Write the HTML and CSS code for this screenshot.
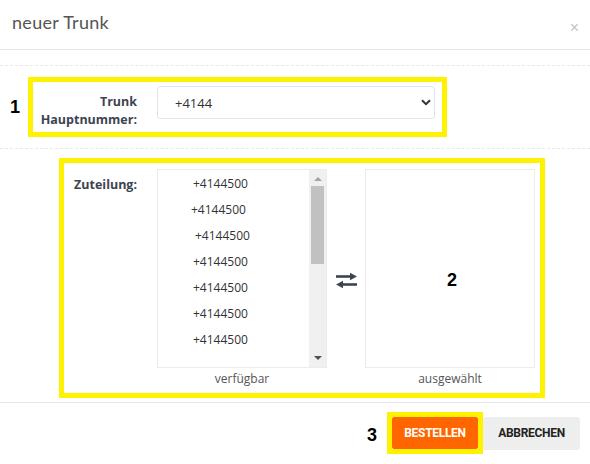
FILE: index.html
```html
<!DOCTYPE html>
<html lang="de">
<head>
<meta charset="utf-8">
<title>neuer Trunk</title>
<link rel="stylesheet" href="styles.css">
</head>
<body>
<div class="modal">
  <div class="modal-header">
    <h4 class="modal-title">neuer Trunk</h4>
    <span class="close">&times;</span>
  </div>
  <div class="modal-body">
    <div class="form-row row-1">
      <span class="marker">1</span>
      <div class="hl hl-1">
        <label class="lbl lbl-1">Trunk<br>Hauptnummer:</label>
        <div class="select">
          <span class="select-value">+4144</span>
          <svg class="chevron" width="10" height="7" viewBox="0 0 10 7"><path d="M1 1.2 L5 5.2 L9 1.2" fill="none" stroke="#333" stroke-width="2"/></svg>
        </div>
      </div>
    </div>
    <div class="form-row row-2">
      <div class="hl hl-2">
        <label class="lbl lbl-2">Zuteilung:</label>
        <div class="dual">
          <div class="dual-col">
            <div class="listbox">
              <ul class="items">
                <li>+4144500</li>
                <li class="s1">+4144500</li>
                <li class="s2">+4144500</li>
                <li>+4144500</li>
                <li>+4144500</li>
                <li>+4144500</li>
                <li>+4144500</li>
              </ul>
              <div class="scrollbar">
                <span class="arrow up"></span>
                <span class="thumb"></span>
                <span class="arrow down"></span>
              </div>
            </div>
            <div class="caption">verfügbar</div>
          </div>
          <div class="swap">
            <svg width="23" height="17" viewBox="0 0 23 17">
              <path d="M1 4.5 H16" stroke="#3d4451" stroke-width="2.6"/>
              <path d="M15 0.8 L22 4.5 L15 8.2 Z" fill="#3d4451"/>
              <path d="M7 12.5 H22" stroke="#3d4451" stroke-width="2.6"/>
              <path d="M8 8.8 L1 12.5 L8 16.2 Z" fill="#3d4451"/>
            </svg>
          </div>
          <div class="dual-col">
            <div class="listbox listbox-right">
              <span class="marker marker-2">2</span>
            </div>
            <div class="caption">ausgewählt</div>
          </div>
        </div>
      </div>
    </div>
  </div>
  <div class="modal-footer">
    <span class="marker marker-3">3</span>
    <div class="hl hl-3"><button class="btn btn-primary">BESTELLEN</button></div>
    <button class="btn btn-default">ABBRECHEN</button>
  </div>
</div>
</body>
</html>
```
FILE: styles.css
```css
* { box-sizing: border-box; }
html, body { margin: 0; padding: 0; background: #fff; }
body { width: 590px; height: 464px; overflow: hidden; font-family: "Open Sans", "Noto Sans", sans-serif; color: #333; }

.modal { width: 590px; }

.modal-header {
  height: 50px;
  border-bottom: 1px solid #e5e8ee;
  display: flex;
  align-items: center;
  justify-content: space-between;
  padding: 0 11px 6px 12px;
}
.modal-title {
  margin: 0;
  font-family: Lato, "Open Sans", sans-serif;
  font-weight: 400;
  font-size: 18px;
  color: #555;
  letter-spacing: 0.3px;
}
.close {
  font-family: "Liberation Sans", sans-serif;
  font-size: 16px;
  color: #c4c4c4;
  margin-top: 12px;
}

.modal-body { padding-top: 15px; }

.form-row { display: flex; align-items: flex-start; }
.row-1 {
  border-top: 1px dashed #e8e8e8;
  border-bottom: 1px dashed #e8e8e8;
  padding: 11px 0 11px 10px;
  align-items: center;
}
.row-2 { padding: 9px 0 4px 59px; }

.marker {
  font-family: "Liberation Sans", Arial, sans-serif;
  font-weight: 700;
  font-size: 18px;
  color: #000;
  line-height: 1;
}
.row-1 .marker { width: 18px; }

.hl { border: 5px solid #fff200; display: flex; }
.hl-1 { width: 419px; height: 60px; padding: 4px 7px 0 0; align-items: flex-start; }
.hl-2 { width: 486px; height: 240px; padding: 6px 5px 0 0; }

.lbl {
  font-family: "Open Sans", sans-serif;
  font-weight: 700;
  font-size: 12.5px;
  line-height: 18px;
  color: #3d4451;
  text-align: right;
  flex: none;
}
.lbl-1 { width: 104px; padding-top: 7px; }
.lbl-2 { width: 73px; padding-top: 7px; }

.select {
  margin-left: 20px;
  width: 278px;
  height: 33px;
  border: 1px solid #dfe4ec;
  border-radius: 3px;
  display: flex;
  align-items: center;
  justify-content: space-between;
  padding: 0 3px 0 17px;
}
.select-value { font-size: 13px; color: #333; }

.dual { margin-left: 20px; display: flex; }
.dual-col { width: 170px; display: flex; flex-direction: column; }
.listbox {
  height: 199px;
  border: 1px solid #ececec;
  display: flex;
}
.items {
  list-style: none;
  margin: 0;
  padding: 1px 0 0 35px;
  flex: 1;
  overflow: hidden;
}
.items li {
  height: 26px;
  line-height: 26px;
  font-size: 12px;
  color: #333;
}
.items li.s1 { margin-left: -2px; }
.items li.s2 { margin-left: 2px; }

.scrollbar {
  width: 17px;
  background: #f0f0f0;
  display: flex;
  flex-direction: column;
  align-items: center;
}
.thumb { width: 13px; height: 78px; background: #c1c1c1; margin: 5px 0 0; }
.arrow { width: 0; height: 0; border-left: 4px solid transparent; border-right: 4px solid transparent; }
.arrow.up { border-bottom: 4px solid #a3a3a3; margin-top: 7px; }
.arrow.down { border-top: 4px solid #505050; margin-top: auto; margin-bottom: 7px; }

.caption {
  text-align: center;
  font-size: 12px;
  line-height: 22px;
  color: #555;
}

.swap { width: 38px; padding: 103px 0 0 8px; }
.swap svg { display: block; }

.listbox-right { justify-content: center; padding: 101px 0 0 4px; }

.modal-footer {
  border-top: 1px solid #e5e8ee;
  height: 61px;
  display: flex;
  align-items: center;
  justify-content: flex-end;
  padding: 0 10px 0 0;
}
.marker-3 { margin-right: 10px; margin-top: 4px; }
.hl-3 { padding: 0; }
.btn {
  font-family: Roboto, "Liberation Sans", sans-serif;
  font-weight: 700;
  font-size: 12px;
  border: none;
  border-radius: 2px;
  cursor: pointer;
  letter-spacing: -0.3px;
  padding: 0;
}
.btn-primary { width: 86px; height: 32px; background: #ff6600; color: #fff; }
.btn-default { width: 97px; height: 33px; background: #eeeeee; color: #222; border-radius: 3px; }
```
